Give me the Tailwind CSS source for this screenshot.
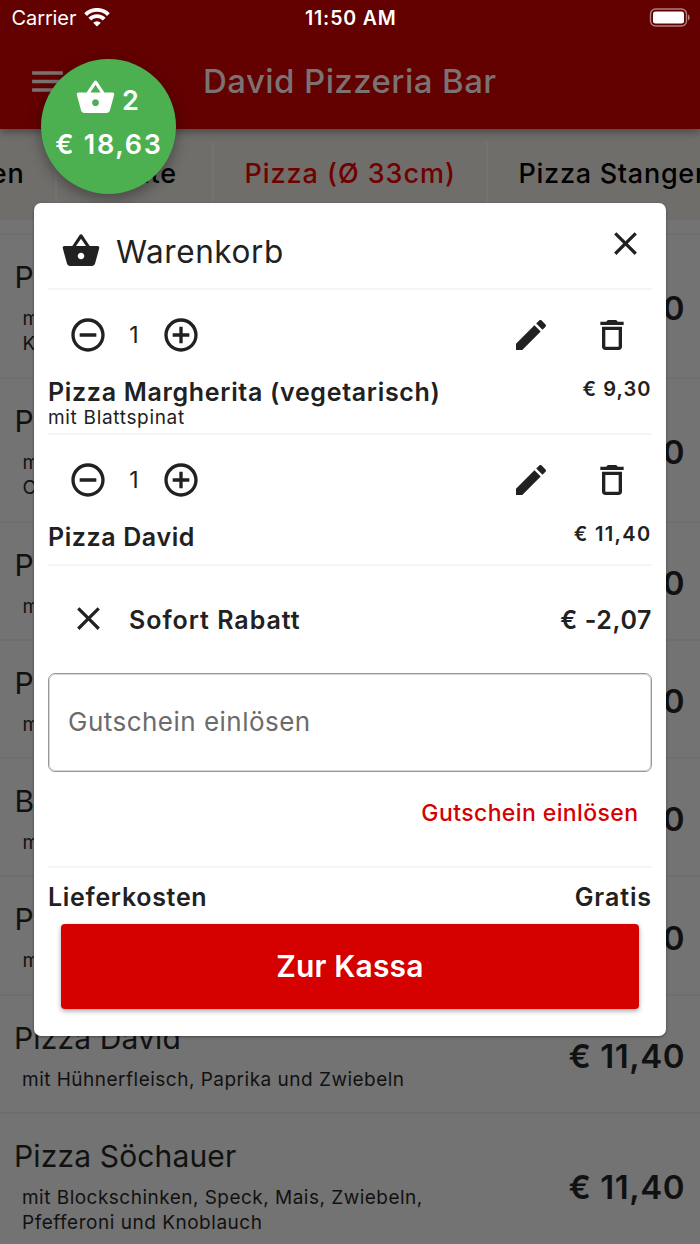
<!DOCTYPE html>
<html lang="de">
<head>
<meta charset="utf-8">
<title>Warenkorb</title>
<script src="https://cdn.jsdelivr.net/npm/@tailwindcss/browser@4"></script>
</head>
<body class="bg-[#737373]">
<svg class="hidden">
  <symbol id="basket" viewBox="0 0 24 24"><path d="M17.21 9l-4.38-6.56c-.19-.28-.51-.42-.83-.42-.32 0-.64.14-.83.43L6.79 9H2c-.55 0-1 .45-1 1 0 .09.01.18.04.27l2.54 9.27c.23.84 1 1.46 1.92 1.46h13c.92 0 1.69-.62 1.93-1.46l2.54-9.27L23 10c0-.55-.45-1-1-1h-4.79zM9 9l3-4.4L15 9H9zm3 8c-1.1 0-2-.9-2-2s.9-2 2-2 2 .9 2 2-.9 2-2 2z"/></symbol>
  <symbol id="close" viewBox="0 0 24 24"><path d="M19 6.41L17.59 5 12 10.59 6.41 5 5 6.41 10.59 12 5 17.59 6.41 19 12 13.41 17.59 19 19 17.59 13.41 12z"/></symbol>
  <symbol id="minus" viewBox="0 0 24 24"><path d="M7 11v2h10v-2H7zm5-9C6.48 2 2 6.48 2 12s4.48 10 10 10 10-4.48 10-10S17.52 2 12 2zm0 18c-4.41 0-8-3.59-8-8s3.59-8 8-8 8 3.59 8 8-3.59 8-8 8z"/></symbol>
  <symbol id="plus" viewBox="0 0 24 24"><path d="M13 7h-2v4H7v2h4v4h2v-4h4v-2h-4V7zm-1-5C6.48 2 2 6.48 2 12s4.48 10 10 10 10-4.48 10-10S17.52 2 12 2zm0 18c-4.41 0-8-3.59-8-8s3.59-8 8-8 8 3.59 8 8-3.59 8-8 8z"/></symbol>
  <symbol id="edit" viewBox="0 0 24 24"><path d="M3 17.25V21h3.75L17.81 9.94l-3.75-3.75L3 17.25zM20.71 7.04c.39-.39.39-1.02 0-1.41l-2.34-2.34c-.39-.39-1.02-.39-1.41 0l-1.83 1.83 3.75 3.75 1.83-1.83z"/></symbol>
  <symbol id="trash" viewBox="0 0 24 24"><path d="M6 19c0 1.1.9 2 2 2h8c1.1 0 2-.9 2-2V7H6v12zM8 9h8v10H8V9zm7.5-5l-.7-.7c-.2-.2-.45-.3-.7-.3H9.9c-.25 0-.5.1-.7.3l-.7.7H5v2h14V4h-3.5z"/></symbol>
</svg>

<div class="relative w-[700px] h-[1244px] overflow-hidden bg-[#737373] font-['Inter',sans-serif] text-[#111]">

  <header class="relative z-10 h-[128.5px] bg-[#630000] shadow-[0_3px_8px_rgba(0,0,0,0.35)]">
    <div class="grid grid-cols-3 items-center h-[35px] pl-[11.5px] pr-[10px] text-white">
      <div class="flex items-center gap-[7.5px]">
        <span class="text-[20px] leading-[36px] tracking-[-0.1px]">Carrier</span>
        <svg class="w-[26px] h-[19px] -mt-[2px]" viewBox="0 0 26 19" fill="none" stroke="#fff" stroke-width="3.9"><path d="M1.6 6.6A16.2 16.2 0 0 1 24.4 6.6M5.8 11.2A10 10 0 0 1 20.2 11.2"/><path d="M13 18.5L9.2 14.8A5.4 5.4 0 0 1 16.8 14.8z" fill="#fff" stroke="none"/></svg>
      </div>
      <span class="text-center text-[19.5px] leading-[36px] font-semibold tracking-[0.85px]">11:50 AM</span>
      <svg class="w-[41px] h-[20px] justify-self-end" viewBox="0 0 41 20"><rect x="1.5" y="1" width="36" height="17" rx="5" fill="none" stroke="#b07f7f" stroke-width="1.4"/><rect x="4" y="3.6" width="31" height="12" rx="2.4" fill="#fff"/><path d="M39 6.6c2.2 1 2.2 5 0 6z" fill="#b07f7f"/></svg>
    </div>
    <div class="flex items-center h-[91.5px] pl-[27px]">
      <svg class="w-[41px] h-[41px] mt-[1px]" viewBox="0 0 24 24" fill="#7b7373"><path d="M3 18h18v-2H3v2zm0-5h18v-2H3v2zm0-7v2h18V6H3z"/></svg>
      <h1 class="ml-[135px] text-[33px] leading-[40px] font-medium tracking-[0.42px] text-[#7b7373]">David Pizzeria Bar</h1>
    </div>
  </header>

  <nav class="flex h-[91.5px] pt-[13.5px] bg-[#706e6b] text-[27px] leading-[63px] font-medium tracking-[0.8px] text-black whitespace-nowrap">
    <div class="flex justify-end shrink-0 w-[57px] pr-[30.5px] border-r-2 border-[#757371]">Vorspeisen</div>
    <div class="shrink-0 w-[157px] pl-[35.5px] border-r-2 border-[#757371]">Salate</div>
    <div class="shrink-0 w-[274px] pl-[30.5px] border-r-2 border-[#757371] text-[#710000] tracking-[0.95px]">Pizza (Ø 33cm)</div>
    <div class="shrink-0 pl-[30.5px] tracking-[0.72px]">Pizza Stangen</div>
  </nav>

  <main class="mt-[13px]">
    <section class="flex items-center justify-between h-[143.8px] border-t-2 border-[#6e6e6e] pr-[15px]">
      <div class="h-full pt-[22px] pl-[14.5px]"><h2 class="text-[30px] leading-[40px]">Pizza</h2><p class="mt-[9px] pl-[8px] text-[19px] leading-[25.4px]">mit<br>K</p></div>
      <div class="pt-[4px] text-[33px] leading-[40px] font-semibold tracking-[0.4px]">€ 9,30</div>
    </section>
    <section class="flex items-center justify-between h-[143.8px] border-t-2 border-[#6e6e6e] pr-[15px]">
      <div class="h-full pt-[22px] pl-[14.5px]"><h2 class="text-[30px] leading-[40px]">Pizza</h2><p class="mt-[9px] pl-[8px] text-[19px] leading-[25.4px]">mit<br>C</p></div>
      <div class="pt-[4px] text-[33px] leading-[40px] font-semibold tracking-[0.4px]">€ 9,90</div>
    </section>
    <section class="flex items-center justify-between h-[118.3px] border-t-2 border-[#6e6e6e] pr-[15px]">
      <div class="h-full pt-[22px] pl-[14.5px]"><h2 class="text-[30px] leading-[40px]">Pizza</h2><p class="mt-[9px] pl-[8px] text-[19px] leading-[25.4px]">mit</p></div>
      <div class="pt-[4px] text-[33px] leading-[40px] font-semibold tracking-[0.4px]">€ 9,90</div>
    </section>
    <section class="flex items-center justify-between h-[118.3px] border-t-2 border-[#6e6e6e] pr-[15px]">
      <div class="h-full pt-[22px] pl-[14.5px]"><h2 class="text-[30px] leading-[40px]">Pizza</h2><p class="mt-[9px] pl-[8px] text-[19px] leading-[25.4px]">mit</p></div>
      <div class="pt-[4px] text-[33px] leading-[40px] font-semibold tracking-[0.4px]">€ 9,90</div>
    </section>
    <section class="flex items-center justify-between h-[118.3px] border-t-2 border-[#6e6e6e] pr-[15px]">
      <div class="h-full pt-[22px] pl-[14.5px]"><h2 class="text-[30px] leading-[40px]">B</h2><p class="mt-[9px] pl-[8px] text-[19px] leading-[25.4px]">mit</p></div>
      <div class="pt-[4px] text-[33px] leading-[40px] font-semibold tracking-[0.4px]">€ 9,90</div>
    </section>
    <section class="flex items-center justify-between h-[118.3px] border-t-2 border-[#6e6e6e] pr-[15px]">
      <div class="h-full pt-[22px] pl-[14.5px]"><h2 class="text-[30px] leading-[40px]">Pizza</h2><p class="mt-[9px] pl-[8px] text-[19px] leading-[25.4px]">mit</p></div>
      <div class="pt-[4px] text-[33px] leading-[40px] font-semibold tracking-[0.4px]">€ 9,90</div>
    </section>
    <section class="flex items-center justify-between h-[118.3px] border-t-2 border-[#6e6e6e] pr-[15px]">
      <div class="h-full pt-[22px] pl-[14px]"><h2 class="text-[30px] leading-[40px] tracking-[0.15px]">Pizza David</h2><p class="mt-[9px] pl-[8px] text-[19px] leading-[25.4px] tracking-[0.49px]">mit Hühnerfleisch, Paprika und Zwiebeln</p></div>
      <div class="pt-[4px] text-[33px] leading-[40px] font-semibold tracking-[0.5px]">€ 11,40</div>
    </section>
    <section class="flex items-center justify-between h-[143.8px] border-t-2 border-[#6e6e6e] pr-[15px]">
      <div class="h-full pt-[22px] pl-[14px]"><h2 class="text-[30px] leading-[40px] tracking-[0.15px]">Pizza Söchauer</h2><p class="mt-[9px] pl-[8px] text-[19px] leading-[25.4px] tracking-[0.48px]">mit Blockschinken, Speck, Mais, Zwiebeln,<br><span class="tracking-[0.52px]">Pfefferoni und Knoblauch</span></p></div>
      <div class="pt-[4px] text-[33px] leading-[40px] font-semibold tracking-[0.5px]">€ 11,40</div>
    </section>
  </main>

  <!-- Floating cart button -->
  <div class="absolute z-20 left-[41px] top-[59px] size-[135px] rounded-full bg-[#4caf50] text-white font-semibold shadow-[0_5px_14px_rgba(0,0,0,0.35)] pt-[17px]">
    <div class="flex items-center pl-[33.5px]">
      <svg class="size-[41px]" fill="#fff"><use href="#basket"/></svg>
      <span class="ml-[6.5px] mt-[7px] text-[27px] leading-[35px]">2</span>
    </div>
    <div class="mt-[8.5px] pl-[1px] text-center text-[27px] leading-[36px] tracking-[1.7px] whitespace-nowrap">€ 18,63</div>
  </div>

  <!-- Cart dialog -->
  <div class="absolute z-30 left-[34px] top-[203px] w-[632px] h-[833px] rounded-[7px] bg-white px-[14px] text-[#212121] fill-[#212121] shadow-[0_1px_3px_rgba(0,0,0,0.4)]">
    <div class="flex h-[87px] pt-[28px] pl-[13px] border-b-2 border-[#f5f5f5]">
      <svg class="size-[40px]"><use href="#basket"/></svg>
      <h2 class="ml-[15px] text-[31.5px] leading-[42px] tracking-[0.58px]">Warenkorb</h2>
      <svg class="ml-auto mr-[7px] -mt-[7px] size-[39px]"><use href="#close"/></svg>
    </div>

    <div class="h-[145.3px] pt-[24.7px] border-b-2 border-[#f5f5f5]">
      <div class="flex items-center h-[40px] pl-[20px] pr-[20px]">
        <svg class="size-[40px]"><use href="#minus"/></svg>
        <span class="w-[52px] mr-[1px] text-center text-[23px] leading-[30px]">1</span>
        <svg class="size-[40px]"><use href="#plus"/></svg>
        <svg class="ml-auto size-[40px]"><use href="#edit"/></svg>
        <svg class="ml-[41px] size-[40px]"><use href="#trash"/></svg>
      </div>
      <div class="flex justify-between mt-[22px] font-semibold">
        <span class="text-[25px] leading-[30px] tracking-[0.68px]">Pizza Margherita (vegetarisch)</span>
        <span class="pr-[0.5px] text-[20px] leading-[24px] tracking-[1.05px]">€ 9,30</span>
      </div>
      <p class="-mt-[1px] text-[19px] leading-[24px] tracking-[0.68px]">mit Blattspinat</p>
    </div>

    <div class="h-[130.3px] pt-[24.7px] border-b-2 border-[#f5f5f5]">
      <div class="flex items-center h-[40px] pl-[20px] pr-[20px]">
        <svg class="size-[40px]"><use href="#minus"/></svg>
        <span class="w-[52px] mr-[1px] text-center text-[23px] leading-[30px]">1</span>
        <svg class="size-[40px]"><use href="#plus"/></svg>
        <svg class="ml-auto size-[40px]"><use href="#edit"/></svg>
        <svg class="ml-[41px] size-[40px]"><use href="#trash"/></svg>
      </div>
      <div class="flex justify-between mt-[22px] font-semibold">
        <span class="text-[25px] leading-[30px] tracking-[0.6px]">Pizza David</span>
        <span class="pr-[0.5px] text-[20px] leading-[24px] tracking-[1.35px]">€ 11,40</span>
      </div>
    </div>

    <div class="flex items-center h-[107.4px] pl-[20.5px] text-[25px] font-semibold">
      <svg class="-mt-[1px] size-[39px]"><use href="#close"/></svg>
      <span class="ml-[21.5px] pt-[3px] tracking-[0.98px]">Sofort Rabatt</span>
      <span class="ml-auto pt-[3px] tracking-[0.6px]">€ -2,07</span>
    </div>

    <div class="flex items-center h-[99px] pl-[19px] pb-[1px] rounded-[7px] border outline-1 -outline-offset-2 outline-[#9e9e9e]/40 border-[#979797] text-[26px] tracking-[0.48px] text-[#6b6b6b]">Gutschein einlösen</div>
    <div class="flex justify-end h-[96px] pt-[25px] pr-[13.5px] border-b-2 border-[#f5f5f5] text-[23px] leading-[32px] font-medium tracking-[0.4px] text-[#d50000]">Gutschein einlösen</div>

    <div class="flex justify-between pt-[14px] text-[25px] leading-[30px] font-semibold">
      <span class="tracking-[0.7px]">Lieferkosten</span>
      <span class="tracking-[0.9px]">Gratis</span>
    </div>
    <div class="flex items-center justify-center mx-[13px] mt-[12.5px] h-[84.5px] rounded-[4px] bg-[#d50000] text-white text-[30px] font-semibold tracking-[0.15px] shadow-[0_2px_5px_rgba(0,0,0,0.35)]">Zur Kassa</div>
  </div>
</div>
</body>
</html>
